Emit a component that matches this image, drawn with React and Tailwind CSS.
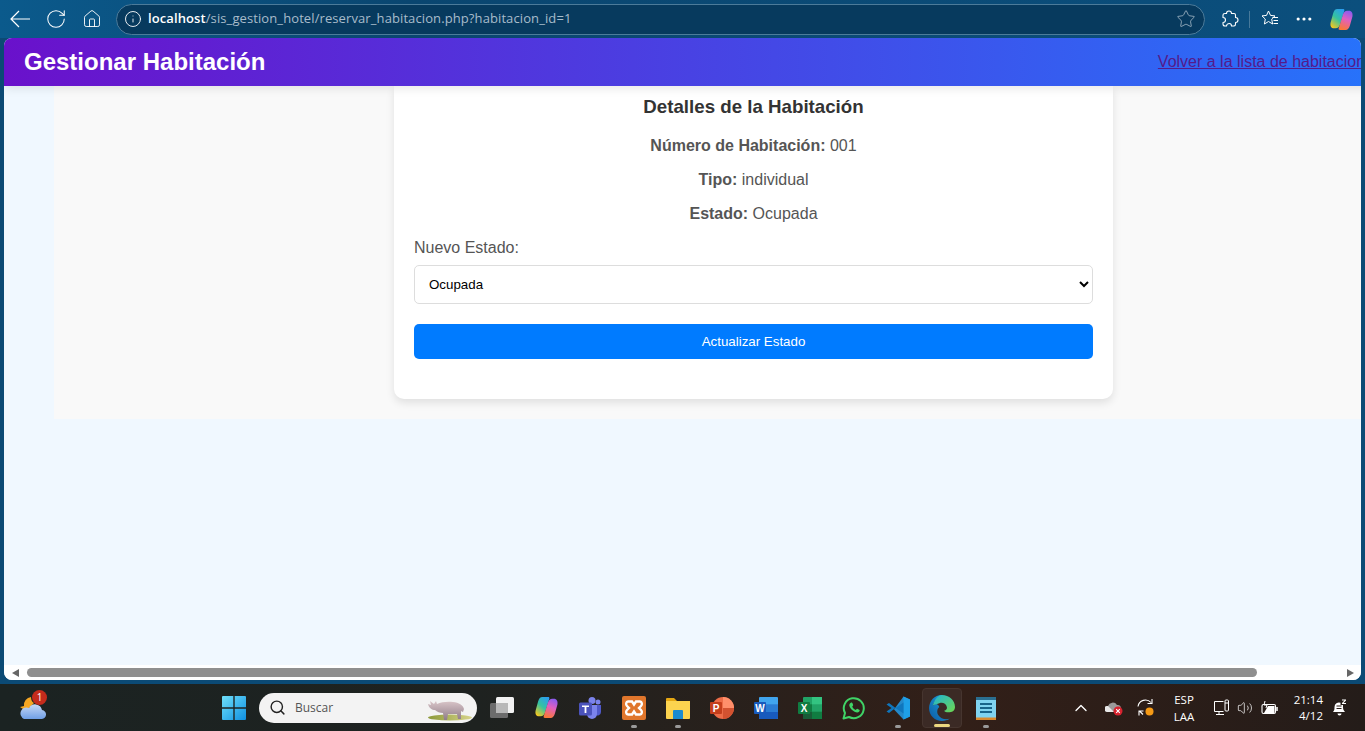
import React from "react";
import { RotateCw, Home, Info, Star, Search, ChevronUp, Volume2, Ellipsis } from "lucide-react";

const Copilot = ({ s = 24, id = "cp" }) => (
  <svg width={s} height={s} viewBox="0 0 24 24">
    <defs>
      <linearGradient id={id + "a"} x1="0.8" y1="0" x2="0.2" y2="1"><stop offset="0" stopColor="#2a9df0" /><stop offset="0.5" stopColor="#35c3a0" /><stop offset="1" stopColor="#f6c81e" /></linearGradient>
      <linearGradient id={id + "c"} x1="0.7" y1="0" x2="0.4" y2="1"><stop offset="0" stopColor="#8a5cf0" /><stop offset="0.45" stopColor="#e05fc0" /><stop offset="1" stopColor="#f9783a" /></linearGradient>
    </defs>
    <path d="M8 2h5.500c1 0 1.500.5 1.200 1.500L10.500 17c-.5 2-2 3.500-4 3.500H5C2 20.500 1 18 1.500 15L4 6C4.800 3.500 6 2 8 2z" fill={`url(#${id}a)`} />
    <path d="M16 22h-5.500c-1 0-1.500-.5-1.200-1.500L13.500 7c.5-2 2-3.500 4-3.500H19c3 0 4 2.500 3.500 5.500L20 18c-.8 2.500-2 4-4 4z" fill={`url(#${id}c)`} />
  </svg>
);

const Weather = () => (
  <svg width="28" height="26" viewBox="0 0 28 26">
    <path d="M13 2a8 8 0 0 0 -7 9l-4 1 6 4 8-8c-2-1-3-3-3-6z" fill="#f5a623" />
    <defs><linearGradient id="wc" x1="0" y1="0" x2="0" y2="1"><stop offset="0" stopColor="#c6d8f5" /><stop offset="1" stopColor="#6f9fe6" /></linearGradient></defs>
    <path d="M6 24h17a4.500 4.500 0 0 0 1-9 7 7 0 0 0 -13-2 6 6 0 0 0 -5 11z" fill="url(#wc)" />
  </svg>
);

const WinLogo = () => (
  <svg width="24" height="24" viewBox="0 0 24 24">
    <defs><linearGradient id="wl" x1="0" y1="0" x2="1" y2="1"><stop offset="0" stopColor="#6fe0fb" /><stop offset="1" stopColor="#0f8fe0" /></linearGradient></defs>
    <path d="M0 1a1 1 0 0 1 1-1h10.300v11.300H0zM12.700 0H23a1 1 0 0 1 1 1v10.300H12.700zM0 12.700h11.300V24H1a1 1 0 0 1-1-1zM12.700 12.700H24V23a1 1 0 0 1-1 1H12.700z" fill="url(#wl)" />
  </svg>
);

const TaskView = () => (
  <svg width="24" height="24" viewBox="0 0 24 24">
    <rect x="0" y="7" width="18" height="15" rx="1.500" fill="#6c6c6c" />
    <rect x="6" y="1" width="18" height="16" rx="1.500" fill="#f2f2f2" />
    <rect x="6" y="7" width="12" height="10" fill="#b8b8b8" />
  </svg>
);

const Teams = () => (
  <svg width="24" height="24" viewBox="0 0 24 24">
    <circle cx="20" cy="6" r="2.500" fill="#7b83eb" />
    <circle cx="14" cy="4.500" r="3.500" fill="#7b83eb" />
    <path d="M16 9h7v7a3.500 3.500 0 0 1-6 2.500z" fill="#5059c9" />
    <path d="M9 9h10v9a5 5 0 0 1-10 0z" fill="#7b83eb" />
    <rect x="1" y="6.500" width="13" height="13" rx="1.500" fill="#4b53bc" />
    <path d="M4 9.500h7v1.600H8.400V17H6.600v-5.900H4z" fill="#fff" />
  </svg>
);

const Xampp = () => (
  <svg width="24" height="24" viewBox="0 0 24 24">
    <rect width="24" height="24" rx="2" fill="#e0762c" />
    <path d="M6 5.500h4l2 3 2-3h4c2 0 2.500 3 1 4.500l-2 2 2 2c1.500 1.500 1 4.500-1 4.500h-4l-2-3-2 3H6c-2 0-2.500-3-1-4.500l2-2-2-2C3.500 8.500 4 5.500 6 5.500z" fill="none" stroke="#fff" strokeWidth="2.400" />
  </svg>
);

const Folder = () => (
  <svg width="24" height="24" viewBox="0 0 24 24">
    <path d="M0 3a1 1 0 0 1 1-1h7l3 3h-11z" fill="#e5a713" />
    <path d="M0 5h24v17a1 1 0 0 1-1 1H1a1 1 0 0 1-1-1z" fill="#fcd34f" />
    <path d="M7 15a1 1 0 0 1 1-1h8a1 1 0 0 1 1 1v8H7z" fill="#1b8bd0" />
  </svg>
);

const PowerPoint = () => (
  <svg width="24" height="24" viewBox="0 0 24 24">
    <circle cx="13" cy="12" r="11" fill="#ed6c47" />
    <path d="M13 1a11 11 0 0 1 11 11H13z" fill="#ff8f6b" />
    <path d="M13 12h11a11 11 0 0 1-11 11z" fill="#d35230" />
    <rect x="0" y="6" width="12" height="12" rx="1" fill="#c43e1c" />
    <text x="6" y="15.500" textAnchor="middle" fontSize="10" fontWeight="700" fill="#fff" fontFamily="Liberation Sans, sans-serif">P</text>
  </svg>
);

const Word = () => (
  <svg width="24" height="24" viewBox="0 0 24 24">
    <rect x="5" y="1" width="19" height="22" rx="1" fill="#41a5ee" />
    <rect x="5" y="8.300" width="19" height="7.400" fill="#2b7cd3" />
    <path d="M5 15.700h19V22a1 1 0 0 1-1 1H6a1 1 0 0 1-1-1z" fill="#185abd" />
    <rect x="0" y="6" width="12" height="12" rx="1" fill="#185abd" />
    <text x="6" y="15.500" textAnchor="middle" fontSize="10" fontWeight="700" fill="#fff" fontFamily="Liberation Sans, sans-serif">W</text>
  </svg>
);

const Excel = () => (
  <svg width="24" height="24" viewBox="0 0 24 24">
    <rect x="5" y="1" width="19" height="22" rx="1" fill="#21a366" />
    <rect x="14" y="1" width="10" height="7.300" fill="#33c481" />
    <rect x="5" y="8.300" width="9" height="7.400" fill="#107c41" />
    <rect x="14" y="15.700" width="10" height="7.300" fill="#107c41" />
    <rect x="5" y="15.700" width="9" height="7.300" fill="#185c37" />
    <rect x="0" y="6" width="12" height="12" rx="1" fill="#107c41" />
    <text x="6" y="15.500" textAnchor="middle" fontSize="10" fontWeight="700" fill="#fff" fontFamily="Liberation Sans, sans-serif">X</text>
  </svg>
);

const WhatsApp = () => (
  <svg width="24" height="24" viewBox="0 0 24 24">
    <path d="M1.500 22.500l1.500-5.500a10 10 0 1 1 4 4z" fill="none" stroke="#3fd367" strokeWidth="2" strokeLinejoin="round" />
    <path d="M8.500 7c1-.8 1.600-.6 2 .3l.6 1.500c.2.500 0 .9-.6 1.500-.3.300-.3.600 0 1 .7 1.100 1.500 1.900 2.700 2.500.4.200.7.100 1-.2.600-.7 1-.9 1.500-.6l1.500.8c.7.400.7 1-.1 1.900-1 1-2.600 1-4.500 0-2.100-1.100-3.800-2.800-4.800-4.800-.9-1.700-.6-2.900.7-3.900z" fill="#3fd367" />
  </svg>
);

const VSCode = () => (
  <svg width="24" height="24" viewBox="0 0 24 24">
    <path d="M17.500 0.500L24 3.500v17l-6.500 3L8 13.500z" fill="#2489ca" />
    <path d="M17.500 0.500L24 3.500v17l-6.500 3z" fill="#1ea0e8" />
    <path d="M17.500 6.500v11L9.500 12 3 17 .5 15.500 5.500 12 .5 8.500 3 7l6.500 5z" fill="#0f76bd" />
  </svg>
);

const Edge = () => (
  <svg width="26" height="26" viewBox="0 0 24 24">
    <defs>
      <linearGradient id="ed1" x1="0" y1="1" x2="1" y2="0"><stop offset="0" stopColor="#0c59a4" /><stop offset="1" stopColor="#1fa7e0" /></linearGradient>
      <linearGradient id="ed2" x1="0" y1="0" x2="1" y2="1"><stop offset="0" stopColor="#1fb4d6" /><stop offset="1" stopColor="#6fd84e" /></linearGradient>
    </defs>
    <path d="M12 0C5 0 .3 5.500 0 12c0 7 5.500 12 12 12 2.500 0 5-.7 7-2-4 1-8.500 0-10.500-3.500-1.500-2.500-1-6 1-7.500C8 7 5 8 3.500 10 5 4.500 9 2 12 2z" fill="url(#ed1)" />
    <path d="M12 0c6.500 0 12 5 12 11 0 3.500-3 5-6 5-2 0-3.500-.6-4-1.500 2-.5 3-2 2.500-3.500C15.500 7.500 12.500 6.500 9.500 7.500 5.500 9 3.800 9 3.500 10 5 4 8.500 0 12 0z" fill="url(#ed2)" />
  </svg>
);

const Notepad = () => (
  <svg width="24" height="26" viewBox="0 0 24 26">
    <rect x="2" y="2" width="20" height="23" rx="1" fill="#7fd3f0" />
    <rect x="2" y="2" width="20" height="3" fill="#2a6f91" />
    <rect x="2" y="22.500" width="20" height="2.500" fill="#d9892e" />
    <path d="M6 9h12M6 13h12M6 17h12" stroke="#17648a" strokeWidth="2" />
  </svg>
);

const BackArrow = () => (
  <svg width="20" height="18" viewBox="0 0 20 18" fill="none" stroke="#fff" strokeWidth="1.200">
    <path d="M9 1L1 9l8 8M1 9h19" />
  </svg>
);

const PuzzleOutline = () => (
  <svg width="18" height="18" viewBox="0 0 18 18" fill="none" stroke="#fff" strokeWidth="1.100" strokeLinejoin="round">
    <path d="M5.500 3.500C5.500 2 6.700 1 8 1s2.500 1 2.500 2.500H13c1 0 1.500.5 1.500 1.500v2.500C16 7.500 17 8.500 17 10s-1 2.500-2.500 2.500V14c0 1-.5 2-1.500 2h-2.500c0-1.500-1-2.500-2.200-2.500S5.500 14.500 5.500 16H4c-1 0-2-1-2-2v-1.500C3.500 12.500 4.500 11.500 4.500 10S3.500 7.500 2 7.500V5c0-1 1-1.500 2-1.500z" />
  </svg>
);

const StarList = () => (
  <svg width="20" height="20" viewBox="0 0 20 20" fill="none" stroke="#fff" strokeWidth="1" strokeLinejoin="round">
    <path d="M8.500 2l2 4.400 4.500.5-3.300 3.200.9 4.900L8.500 12.500 4.400 15l.9-4.900L2 6.900l4.500-.5z" />
    <path d="M12.500 8.500h5.500M13.500 11.500h4.500M13.500 14.500h4.500" />
  </svg>
);

const NetIcon = () => (
  <svg width="17" height="17" viewBox="0 0 17 17" fill="none" stroke="#fff" strokeWidth="1">
    <path d="M10.500 12.500H1.500V2.500h9M6 12.500v2.500M3 15.500h8" />
    <rect x="12" y="1" width="3.500" height="11" rx="1" />
    <path d="M12 4h3.500" />
  </svg>
);

const Battery = () => (
  <svg width="18" height="16" viewBox="0 0 18 16" fill="none" stroke="#fff" strokeWidth="1.100">
    <rect x="1" y="4.500" width="13.500" height="9" rx="1.500" />
    <path d="M16 7v4" strokeWidth="1.500" />
    <path d="M3 13l4-7h6.500v7z" fill="#fff" stroke="none" />
    <path d="M4 1L3 5h3L5 8" strokeWidth="1" />
  </svg>
);

const SyncIcon = () => (
  <svg width="20" height="20" viewBox="0 0 20 20" fill="none" stroke="#fff" strokeWidth="1.100">
    <path d="M2 8.500a7.500 7.500 0 0 1 13-4M16 1v4.500h-4.500" />
    <path d="M7 16.500L3.500 13M3 17.500v-4.500h4.500" />
    <circle cx="13.500" cy="13.500" r="4" fill="#f59a16" stroke="none" />
  </svg>
);

const CloudError = () => (
  <svg width="18" height="16" viewBox="0 0 18 16">
    <path d="M2 12a3 3 0 0 1 1-6 5 5 0 0 1 9-1 3.500 3.500 0 0 1 1 7z" fill="#9a9a9a" />
    <path d="M2 12a3 3 0 0 1 1-6l6 6z" fill="#e8e8e8" />
    <circle cx="13" cy="11" r="4.500" fill="#d8232f" />
    <path d="M11.200 9.200l3.600 3.600M14.800 9.200l-3.600 3.600" stroke="#fff" strokeWidth="1.100" />
  </svg>
);

const BellZ = () => (
  <svg width="15" height="17" viewBox="0 0 15 17" fill="#fff">
    <path d="M1 13c1.500-1.500 1.500-3 1.500-5a4.500 4.500 0 0 1 6-4.200V6h2.500v2c0 2 .5 3.500 2 5zM5.500 14.500h4a2 2 0 0 1-4 0z" />
    <path d="M10 .5h4v1l-2.500 2.500H14v1h-4v-1l2.500-2.500H10z" />
    <path d="M4.500 7h5M4.500 9.500h5" stroke="#2d1f1a" strokeWidth="1" />
  </svg>
);

const Rhino = () => (
  <svg width="46" height="26" viewBox="0 0 46 26" className="ml-auto">
    <defs>
      <linearGradient id="rh" x1="0" y1="0" x2="0" y2="1"><stop offset="0" stopColor="#d9c5c8" /><stop offset="1" stopColor="#8f7c88" /></linearGradient>
      <linearGradient id="gr" x1="0" y1="0" x2="1" y2="0"><stop offset="0" stopColor="#8c9a3a" /><stop offset="1" stopColor="#d8d48a" /></linearGradient>
    </defs>
    <ellipse cx="23" cy="22.500" rx="22" ry="3" fill="url(#gr)" />
    <path d="M1 9l3 1-1-4 4 3 2-3 1 3c4-2 10-2.500 16-2 6 .5 10 3 11 7l-1 3-2-1v8h-3l-1-5H21l-1 6h-3l-1-7c-3 0-6-1-8-3-3 0-6-2-7-6z" fill="url(#rh)" />
  </svg>
);

const Slot = ({ children, dot, active }) => (
  <div className={"relative flex h-[40px] w-[40px] items-center justify-center rounded " + (active ? "border border-[#46352f] bg-[#3b2a25]" : "")}>
    {children}
    {dot && <span className="absolute bottom-0 left-1/2 h-[3px] w-[6px] -translate-x-1/2 rounded-full bg-[#9a9a9a]" />}
    {active && <span className="absolute bottom-0 left-1/2 h-[3px] w-[16px] -translate-x-1/2 rounded-full bg-[#ecd67f]" />}
  </div>
);

export default function App() {
  return (
    <div className="flex h-[731px] w-[1365px] flex-col overflow-hidden bg-[#0b4a75] font-['Liberation_Sans',Arial,sans-serif]">
      {/* Browser toolbar */}
      <div className="flex h-[38px] shrink-0 items-center bg-[linear-gradient(90deg,#0b5a8c,#0a4670_30%,#0b4f7d)] font-['Open_Sans',sans-serif] text-white">
        <div className="flex w-[116px] shrink-0 items-center pl-[10px]">
          <BackArrow />
          <RotateCw size={22} strokeWidth={1.1} className="ml-[15px]" />
          <Home size={20} strokeWidth={1.1} className="ml-[15px]" />
        </div>
        <div className="flex h-[31px] w-[1089px] shrink-0 items-center rounded-full border border-[#4c7b9a] bg-[#073a5e] pl-[7px] pr-[8px]">
          <Info size={18} strokeWidth={1.2} />
          <span className="ml-[6px] text-[13px] tracking-[0.1px]">
            <span className="font-semibold text-white">localhost</span>
            <span className="text-[#a8bccb]">/sis_gestion_hotel/reservar_habitacion.php?habitacion_id=1</span>
          </span>
          <Star size={20} strokeWidth={0.9} className="ml-auto text-[#b4c4d0]" />
        </div>
        <div className="ml-[16px]"><PuzzleOutline /></div>
        <div className="ml-[10px] h-[17px] w-px bg-[#47799a]" />
        <div className="ml-[10px]"><StarList /></div>
        <Ellipsis size={20} strokeWidth={1.8} className="ml-[14px]" />
        <div className="ml-[15px]"><Copilot s={25} id="cpt" /></div>
      </div>

      {/* Page viewport */}
      <div className="mx-[4px] flex h-[642px] shrink-0 flex-col overflow-hidden rounded-[8px] bg-[#f0f8ff]">
        <div className="flex min-h-0 flex-1 flex-col overflow-hidden">
          <header className="z-10 flex h-[48px] w-[1399px] shrink-0 items-center justify-between bg-[linear-gradient(90deg,#6a11cb,#2575fc)] pl-[20px] pr-[21px] shadow-[0_2px_10px_rgba(0,0,0,0.1)]">
            <h1 className="text-[24px] font-bold text-white">Gestionar Habitación</h1>
            <a href="#" className="text-[16px] text-[#551a8b] underline">Volver a la lista de habitaciones</a>
          </header>
          <main className="ml-[50px] flex h-[333px] w-[1399px] shrink-0 justify-center bg-[#f9f9f9]">
            <div className="flex h-[313px] w-[719px] flex-col rounded-b-[10px] bg-white px-[20px] shadow-[0_4px_8px_rgba(0,0,0,0.1)]">
              <h2 className="mt-[9px] text-center text-[18.72px] leading-[24px] font-bold text-[#333]">Detalles de la Habitación</h2>
              <p className="mt-[18px] text-center text-[16px] leading-[18px] text-[#555]"><b>Número de Habitación:</b> 001</p>
              <p className="mt-[16px] text-center text-[16px] leading-[18px] text-[#555]"><b>Tipo:</b> individual</p>
              <p className="mt-[16px] text-center text-[16px] leading-[18px] text-[#555]"><b>Estado:</b> Ocupada</p>
              <label className="mt-[16px] text-[16px] leading-[18px] text-[#555]">Nuevo Estado:</label>
              <select defaultValue="Ocupada" className="mt-[8px] h-[39px] w-full rounded-[5px] border border-[#ddd] bg-white pl-[10px] text-[13.33px] text-black [appearance:auto]">
                <option>Ocupada</option>
                <option>Disponible</option>
              </select>
              <button className="mt-[20px] h-[35px] w-full rounded-[5px] bg-[#007bff] text-[13.33px] text-white">Actualizar Estado</button>
            </div>
          </main>
        </div>
        {/* Horizontal scrollbar */}
        <div className="flex h-[15px] shrink-0 items-center bg-white pl-[8px] pr-[7px]">
          <span className="h-0 w-0 border-y-[4.5px] border-r-[7px] border-y-transparent border-r-[#666]" />
          <div className="ml-[8px] h-[9px] w-[1230px] rounded-full bg-[#8f8f8f]" />
          <span className="ml-auto h-0 w-0 border-y-[4.5px] border-l-[7px] border-y-transparent border-l-[#666]" />
        </div>
      </div>

      <div className="h-[4px] shrink-0" />

      {/* Taskbar */}
      <div className="flex h-[47px] shrink-0 items-center bg-[linear-gradient(90deg,#1b2322,#1e2220_35%,#321f18_70%,#241c19)] font-['Open_Sans',sans-serif] text-white">
        <div className="flex w-[222px] shrink-0 items-center pl-[18px]">
          <div className="relative">
            <Weather />
            <span className="absolute -top-[5px] left-[14px] flex h-[15px] w-[15px] items-center justify-center rounded-full bg-[#c42b1c] text-[10px] leading-none">1</span>
          </div>
        </div>
        <div className="flex w-[37px] shrink-0"><WinLogo /></div>
        <div className="flex h-[30px] w-[218px] shrink-0 items-center rounded-full bg-[#f3f3f3] pl-[10px] pr-[4px] text-[12px] text-[#555]">
          <Search size={17} strokeWidth={2} className="text-[#222]" />
          <span className="ml-[9px]">Buscar</span>
          <Rhino />
        </div>
        <div className="ml-[5px] flex shrink-0 items-center gap-[4px]">
          <Slot><TaskView /></Slot>
          <Slot><Copilot s={25} id="cpb" /></Slot>
          <Slot><Teams /></Slot>
          <Slot dot><Xampp /></Slot>
          <Slot dot><Folder /></Slot>
          <Slot><PowerPoint /></Slot>
          <Slot><Word /></Slot>
          <Slot><Excel /></Slot>
          <Slot><WhatsApp /></Slot>
          <Slot dot><VSCode /></Slot>
          <Slot active><Edge /></Slot>
          <Slot dot><Notepad /></Slot>
        </div>
        <div className="flex min-w-0 flex-1 items-center pl-[65px] text-[11.5px]">
          <ChevronUp size={20} strokeWidth={1.6} />
          <div className="ml-[14px]"><CloudError /></div>
          <div className="ml-[13px]"><SyncIcon /></div>
          <div className="ml-[16px] flex w-[24px] flex-col items-center leading-[17px]"><span>ESP</span><span>LAA</span></div>
          <div className="ml-[17px]"><NetIcon /></div>
          <Volume2 size={16} strokeWidth={1.1} className="ml-[7px]" />
          <div className="ml-[8px]"><Battery /></div>
          <div className="ml-[13px] flex w-[31px] flex-col items-end leading-[16px]"><span>21:14</span><span>4/12</span></div>
          <div className="ml-[9px]"><BellZ /></div>
        </div>
      </div>
    </div>
  );
}
